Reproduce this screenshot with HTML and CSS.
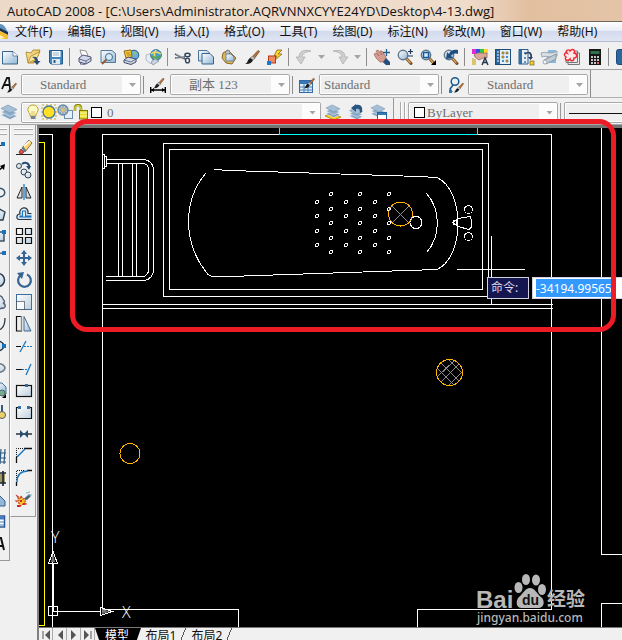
FILE: index.html
```html
<!DOCTYPE html>
<html lang="zh-CN">
<head>
<meta charset="utf-8">
<title>AutoCAD 2008</title>
<link rel="stylesheet" href="styles.css">
</head>
<body>
<svg class="defs" aria-hidden="true">
  <defs>
    <linearGradient id="ice" x1="0" y1="0" x2="1" y2="1"><stop offset="0" stop-color="#ffffff"/><stop offset="1" stop-color="#8fb6d6"/></linearGradient>
    <linearGradient id="pale" x1="0" y1="0" x2="1" y2="1"><stop offset="0" stop-color="#ffffff"/><stop offset="1" stop-color="#bccfe0"/></linearGradient>
    <linearGradient id="gold" x1="0" y1="0" x2="1" y2="1"><stop offset="0" stop-color="#fff3b0"/><stop offset="1" stop-color="#d09a28"/></linearGradient>
    <symbol id="brush" viewBox="0 0 16 16"><path d="M8 8L14 1.5L15.500 2.500L10 10Z" fill="#b9743c" stroke="#6d4222" stroke-width=".7"/><path d="M6 9L8.500 7L11 9.500L9 11Z" fill="#bcc3c9" stroke="#555" stroke-width=".5"/><path d="M1 15C4 14 3 11 6 9L9 11C8 14 5 15.500 1 15Z" fill="#1c1c1c"/></symbol>
    <symbol id="layers" viewBox="0 0 16 16"><path d="M0 11L7 8L16 12L9 15.500Z" fill="#7e9fbd" stroke="#e8f0f7" stroke-width=".6"/><path d="M0 8L7 5L16 9L9 12.500Z" fill="#8eacc7" stroke="#eef5fa" stroke-width=".6"/><path d="M0 4.500L7 1L16 5.500L9 9Z" fill="#a5bfd6" stroke="#6f8da9" stroke-width=".6"/></symbol>
    <symbol id="lens" viewBox="0 0 16 16"><path d="M9 9L14 14.500" stroke="#7a4d24" stroke-width="3" stroke-linecap="round"/><path d="M9.500 9.500L13.500 14" stroke="#d8a35a" stroke-width="1.400"/><circle cx="6" cy="6" r="4.700" fill="url(#ice)" stroke="#65788a" stroke-width="1.400"/></symbol>
  </defs>
</svg>
<div class="app">
  <header class="titlebar"><h1>AutoCAD 2008 - [C:\Users\Administrator.AQRVNNXCYYE24YD\Desktop\4-13.dwg]</h1></header>
  <nav class="menubar">
    <svg class="menu-logo" viewBox="0 0 8 16"><path d="M0 0C4 0 6 4 8 9L0 5Z" fill="#5f93bd"/><path d="M0 4L8 8V11L0 7Z" fill="#1b3350"/><path d="M0 7L8 11V15H0Z" fill="#f5bd2e"/><path d="M0 11L5 14L0 15Z" fill="#fff3c0"/></svg>
    <button>文件(F)</button><button>编辑(E)</button><button>视图(V)</button><button>插入(I)</button><button>格式(O)</button><button>工具(T)</button><button>绘图(D)</button><button>标注(N)</button><button>修改(M)</button><button>窗口(W)</button><button>帮助(H)</button>
  </nav>

  <div class="toolbar standard">
    <button class="tool" aria-label="新建"><svg viewBox="0 0 16 16"><path d="M.5 2.500H11L15.500 7V15H.5Z" fill="url(#ice)" stroke="#3c6488"/><path d="M11 2.500V7H15.500" fill="#fff" stroke="#3c6488" stroke-width=".7"/></svg></button>
    <button class="tool" aria-label="打开"><svg viewBox="0 0 16 16"><path d="M1 3L6 4L8 1L15 1L13 7L9 14H3Z" fill="url(#gold)" stroke="#a87a20" stroke-width=".8"/><path d="M3 14L6 7L15 3L11 10Z" fill="#f9e79a" stroke="#b08528" stroke-width=".7"/><path d="M7 8C11 7 13 9 13 12H15.500L12 16L8.500 12H10.500C10.500 10 9 9 7 8Z" fill="#254d76"/></svg></button>
    <button class="tool" aria-label="保存"><svg viewBox="0 0 16 16"><path d="M1.500 1.500H14.500V15H3L1.500 13.500Z" fill="#4586bd" stroke="#24598c"/><rect x="4" y="2" width="8.500" height="6" fill="#f7fbff"/><path d="M5 4H11M5 6H11" stroke="#9cb0c1"/><rect x="4" y="10" width="8" height="5" fill="#dce8f2"/><rect x="5.500" y="11" width="2" height="3" fill="#2c5c8d"/></svg></button>
    <span class="sep"></span>
    <button class="tool" aria-label="打印"><svg viewBox="0 0 16 16"><path d="M3 1L9 2L11 7L5 8Z" fill="#fff" stroke="#777" stroke-width=".8"/><path d="M2 9L6 6L14 8V12L9 15L2 13Z" fill="#d3d8ea" stroke="#4f5673" stroke-width="1"/><path d="M2 10L9 12L14 9M9 12V15M5 13L3 15L8 15.500" stroke="#4f5673" fill="none" stroke-width=".8"/></svg></button>
    <button class="tool" aria-label="打印预览"><svg viewBox="0 0 16 16"><path d="M1 1.500H12L15.500 4.500V13.500H1Z" fill="url(#ice)" stroke="#55799a"/><path d="M7 10L2 15" stroke="#9a5b2c" stroke-width="2"/><circle cx="9" cy="8" r="3.500" fill="#d8eaf7" stroke="#456b8d"/></svg></button>
    <button class="tool" aria-label="发布"><svg viewBox="0 0 16 16"><circle cx="11" cy="6" r="4.800" fill="#65aee0" stroke="#2c5a87"/><path d="M10 2L14 4L12 7Z" fill="#8fc46c"/><path d="M1 2L8 1L9 8L3 9Z" fill="#f8cf35" stroke="#8f6b12"/><path d="M3 4H7M4 6H8" stroke="#a87a18"/><path d="M1 11L5 8L13 10V13L8 15.500L1 13.500Z" fill="#cfd6e4" stroke="#3f4e69"/><path d="M1 11L8 13L13 10" fill="none" stroke="#3f4e69" stroke-width=".7"/></svg></button>
    <button class="tool" aria-label="三维 DWF"><svg viewBox="0 0 16 16"><path d="M0 6L7 4V12L5 15L0 11Z" fill="#e8edf4" stroke="#a4adbb" stroke-width=".8"/><circle cx="10" cy="6" r="5.400" fill="#4b9fd0" stroke="#275b86" stroke-width=".8"/><path d="M5 5C8 2 12 3 15 5M10 1C8 4 8 8 10 11" fill="none" stroke="#f4de68" stroke-width="1.500"/><path d="M5 7C8 9 12 9 15 7" fill="none" stroke="#4fa759" stroke-width="2"/><path d="M9 10L13 12L7 16L5 13Z" fill="#cdd6e4" stroke="#7d8795" stroke-width=".7"/></svg></button>
    <span class="sep"></span>
    <button class="tool" aria-label="剪切"><svg viewBox="0 0 16 16"><path d="M0 5L10 10M0 9L10 8" stroke="#4a5661" stroke-width="1.600"/><path d="M1 5L9 9M1 9H6" stroke="#e5ebf0" stroke-width=".6"/><ellipse cx="12.500" cy="6" rx="2.600" ry="1.700" fill="none" stroke="#30435c" stroke-width="1.400"/><ellipse cx="12.500" cy="11.500" rx="2" ry="2.400" fill="none" stroke="#30435c" stroke-width="1.400"/></svg></button>
    <button class="tool" aria-label="复制"><svg viewBox="0 0 16 16"><path d="M.5 1.500H9L11.500 4V12H.5Z" fill="url(#ice)" stroke="#4d7497"/><path d="M4 4.500H12L15.500 8V15H4Z" fill="url(#ice)" stroke="#3c6488"/></svg></button>
    <button class="tool" aria-label="粘贴"><svg viewBox="0 0 16 16"><path d="M2 4L7 1L15 9L11 15L5 14L1 9Z" fill="#dcb65c" stroke="#8c682b"/><path d="M4 3L8 1L9 4L6 6Z" fill="#c2c9ce" stroke="#6b737b" stroke-width=".7"/><path d="M5 5H10L13 8V12H5Z" fill="url(#ice)" stroke="#5c7690" stroke-width=".8"/></svg></button>
    <button class="tool" aria-label="特性匹配"><svg viewBox="0 0 16 16"><use href="#brush"/></svg></button>
    <button class="tool" aria-label="块编辑器"><svg viewBox="0 0 16 16"><path d="M10 1L7 7H10L7 12L15 5H11L15 1Z" fill="#ffd62e" stroke="#8a6713" stroke-width=".8"/><rect x="1.500" y="7" width="7" height="7" fill="#f18a5e" stroke="#b33a20"/><rect x="0" y="12" width="4" height="4" fill="#1c78d0"/></svg></button>
    <span class="sep"></span>
    <button class="tool" aria-label="放弃"><svg viewBox="0 0 16 16"><path d="M15 2C7 0 3 3 3 8H0L5 15L9 8H6C6 5 9 3 15 2Z" fill="#cfcfcf" stroke="#aaa" stroke-width=".7"/></svg></button>
    <button class="tool drop" aria-label="放弃列表"></button>
    <button class="tool" aria-label="重做"><svg viewBox="0 0 16 16"><path d="M1 2C9 0 13 3 13 8H16L11 15L7 8H10C10 5 7 3 1 2Z" fill="#cfcfcf" stroke="#aaa" stroke-width=".7"/></svg></button>
    <button class="tool drop" aria-label="重做列表"></button>
    <span class="sep"></span>
    <button class="tool" aria-label="实时平移"><svg viewBox="0 0 16 16"><path d="M0 5L2 4L5 7L2 2L4 1L8 6L6 2L8 2L12 8V10L16 14L13 16L9 13H6L2 9Z" fill="#d49c91" stroke="#a0675d" stroke-width=".7"/><path d="M9 13L12 9L16 13V16H12Z" fill="#274f7c"/><path d="M12.500 0V7M9 3.500H16" stroke="#27608e" stroke-width="1.300"/></svg></button>
    <button class="tool" aria-label="实时缩放"><svg viewBox="0 0 16 16"><use href="#lens"/><path d="M11 2.500H16M13.500 0V5M11 7H16" stroke="#18395a" stroke-width="1.200"/></svg></button>
    <button class="tool" aria-label="窗口缩放"><svg viewBox="0 0 16 16"><use href="#lens"/><rect x="3.500" y="3.500" width="5" height="5" fill="#d9edfa" stroke="#175a9c" stroke-width="1.500"/><path d="M16 11V16H11Z" fill="#000"/></svg></button>
    <button class="tool" aria-label="缩放上一个"><svg viewBox="0 0 16 16"><use href="#lens"/><path d="M15 1C10 0 7 2 6 5L4 3L3 10L10 9L8 7C9 5 11 4 15 5Z" fill="#1f4f80"/></svg></button>
    <span class="sep"></span>
    <button class="tool" aria-label="特性"><svg viewBox="0 0 16 16"><rect width="4" height="5" fill="#e32bd3"/><rect x="4" width="4" height="5" fill="#3949e8"/><rect x="8" width="4" height="5" fill="#22c94b"/><rect x="12" width="4" height="5" fill="#ffd528"/><path d="M2 6C6 2 11 5 15 4V9L11 9L7 11L3 8Z" fill="#daa697" stroke="#94675b" stroke-width=".8"/><path d="M1 9V16M3 10V16" stroke="#d6b641" stroke-width="1.500"/><path d="M10 16L13 9L16 16M11 13.500H15" stroke="#233448" fill="none" stroke-width="1.400"/></svg></button>
    <button class="tool" aria-label="设计中心"><svg viewBox="0 0 16 16"><rect x=".5" y=".5" width="15" height="15" fill="#e6f0f8" stroke="#1f4c77"/><rect x="1" y="1" width="4" height="14" fill="#2c659c"/><path d="M2 3H4M2 6H4M2 9H4M2 12H4" stroke="#fff"/><path d="M7 3H9V5H7ZM11 3H13V5H11ZM7 7H9V9H7ZM11 11H13V13H11Z" fill="#e0bb28" stroke="#6b6340" stroke-width=".6"/><path d="M11 7H13V9H11ZM7 11H9V13H7Z" fill="#418dce"/></svg></button>
    <button class="tool" aria-label="工具选项板"><svg viewBox="0 0 16 16"><path d="M1 .5H10V15H1Z" fill="#e6f0f8" stroke="#2b5d8d"/><rect x="1" y="1" width="3" height="14" fill="#346da2"/><path d="M6 3H8V5H6ZM6 8H8V10H6ZM6 12H8V14H6Z" fill="#668fb4"/><path d="M7 5C11 2 14 4 13 9" fill="none" stroke="#273e58" stroke-width="1.600"/><path d="M10 8H15L12.500 11Z" fill="#273e58"/><rect x="12" y="12" width="4" height="4" fill="#f5cb2e" stroke="#796422" stroke-width=".7"/></svg></button>
    <button class="tool" aria-label="图纸集管理器"><svg viewBox="0 0 16 16"><path d="M7 1H15V14H5Z" fill="#87b8de"/><path d="M0 4C4 2 10 6 16 2V7C11 10 5 6 1 8Z" fill="#d7dfe5" stroke="#8898a4" stroke-width=".8"/><path d="M3 11L15 5V10L5 15Z" fill="#c1cbd2" stroke="#7c8b96" stroke-width=".8"/><ellipse cx="4" cy="13" rx="2" ry="2" fill="#f5f7f8" stroke="#7c8b96" stroke-width=".7"/></svg></button>
    <button class="tool" aria-label="标记集管理器"><svg viewBox="0 0 16 16"><path d="M4 4H15.500V15.500H4ZM2 2H13.500V13.500H2Z" fill="#e9e9e9" stroke="#777"/><path d="M3 4C1 1 5 0 6 2C8-1 12 1 10 4C14 5 13 9 10 9C10 13 6 12 6 10C3 13 0 10 2 8C-1 6 1 3 3 4Z" fill="#ffe8e8" stroke="#ef2936" stroke-width="1.400"/></svg></button>
    <button class="tool" aria-label="快速计算器"><svg viewBox="0 0 16 16"><rect x="2" width="12" height="16" fill="#171717"/><rect x="3.500" y="2" width="9" height="3" fill="#2d704b"/><path d="M4 8H12M4 11H12M4 14H12" stroke="#fff" stroke-width="1.700" stroke-dasharray="2 1"/><path d="M10 14H12" stroke="#e43b2e" stroke-width="1.700"/></svg></button>
    <span class="sep"></span>
    <button class="tool" aria-label="帮助"><svg viewBox="0 0 16 16"><rect x=".5" y=".5" width="15" height="15" rx="2" fill="#2d669d" stroke="#1c4a78"/></svg></button>
  </div>

  <div class="toolbar styles">
    <div class="group"><span class="icon"><svg viewBox="0 0 16 16"><path d="M1 12L6 1H8L9 12M3 8H9" fill="none" stroke="#151515" stroke-width="1.800"/><use href="#brush" x="5" y="5" width="11" height="11"/></svg></span><span class="combo"><select class="indent" aria-label="文字样式"><option>Standard</option></select></span></div>
    <div class="group"><span class="icon"><svg viewBox="0 0 16 16"><path d="M.7 10V16M15.300 10V16M1 13H15" stroke="#000" stroke-width="1.400"/><path d="M1 13L4 11V15ZM15 13L12 11V15Z"/><use href="#brush" x="2" y="0" width="13" height="12"/></svg></span><span class="combo"><select class="indent" aria-label="标注样式"><option>副本 123</option></select></span></div>
    <div class="group"><span class="icon"><svg viewBox="0 0 16 16"><rect x=".5" y="3.500" width="13" height="12" fill="#dceaf7" stroke="#336ba8"/><rect x="1" y="4" width="12" height="3" fill="#3577bb"/><path d="M1 10H13M1 13H13M5 7V15M9 7V15" stroke="#4b80b5"/><use href="#brush" x="4" y="0" width="12" height="12"/></svg></span><span class="combo"><select aria-label="表格样式"><option>Standard</option></select></span></div>
    <div class="group last"><span class="icon"><svg viewBox="0 0 16 16"><circle cx="7" cy="4.500" r="3.800" fill="#e5f1fa" stroke="#1f5689" stroke-width="1.500"/><path d="M5 8L2 12L4 15" fill="none" stroke="#1f5689" stroke-width="1.500"/><rect x="1" y="13" width="3" height="3" fill="#2179bd"/><use href="#brush" x="5" y="5" width="11" height="11"/></svg></span><span class="combo"><select class="indent" aria-label="多重引线样式"><option>Standard</option></select></span></div>
  </div>

  <div class="toolbar properties">
    <div class="group layers">
      <span class="icon"><svg viewBox="0 0 16 16"><use href="#layers"/></svg></span>
      <span class="combo wide"><select aria-label="图层"><option>0</option></select>
        <span class="states">
          <svg viewBox="0 0 16 16"><path d="M5 10C1 6 3 1 8 1S15 6 11 10V12H5Z" fill="#fffbc7" stroke="#bda228"/><path d="M5.500 12H10.500V15H6Z" fill="#78828d"/><path d="M7 11V7M9 11V7" stroke="#c6aa30" stroke-width=".7"/></svg>
          <svg viewBox="0 0 16 16"><path d="M1 1H15V15H1Z" fill="none" stroke="#c9a92c" stroke-dasharray="2 2"/><circle cx="8" cy="8" r="6" fill="#ffdf25" stroke="#477796" stroke-width="1.300"/></svg>
          <svg viewBox="0 0 16 16"><rect x="7.500" y="6.500" width="8" height="8" fill="#e7eef5" stroke="#6b8eaf"/><circle cx="6" cy="6" r="5" fill="#b7c7cc" stroke="#6687a2" stroke-width="1.300"/><path d="M6 1V11M1 6H11M2.500 2.500L9.500 9.500M9.500 2.500L2.500 9.500" stroke="#7693a9" stroke-width=".7"/><circle cx="6" cy="6" r="2" fill="#d9c36f"/></svg>
          <svg viewBox="0 0 16 16"><path d="M2 7V4C2 0 8 0 8 4V9" fill="none" stroke="#8c8b19" stroke-width="2.600"/><path d="M2 7V4C2 1 8 1 8 4V9" fill="none" stroke="#f5ed48"/><rect x="6.500" y="6.500" width="8" height="8.500" fill="#e5dc2e" stroke="#77760c"/><path d="M7 9H14M7 12H14" stroke="#fffba0"/></svg>
          <span class="swatch"></span>
        </span>
      </span>
      <button class="tool" aria-label="置为当前图层"><svg viewBox="0 0 16 16"><path d="M0 12L7 9L16 13L9 16Z" fill="#f5ce28" stroke="#9c7b11" stroke-width=".7"/><use href="#layers" y="0" height="14"/></svg></button>
      <button class="tool" aria-label="上一个图层"><svg viewBox="0 0 16 16"><use href="#layers" y="3" height="13"/><path d="M14 8C15 3 13 0 8 1L8 0L3 4L8 8V5C11 4 12 5 12 9Z" fill="#285581"/></svg></button>
      <button class="tool" aria-label="图层状态"><svg viewBox="0 0 16 16"><use href="#layers" x="-1" y="0" height="14"/><rect x="6.500" y="8.500" width="9" height="7" fill="#fff" stroke="#27659c"/><path d="M7 10H15" stroke="#347bb8" stroke-width="2"/></svg></button>
    </div>
    <div class="group object">
      <span class="grip"></span>
      <span class="combo color"><select aria-label="颜色"><option>ByLayer</option></select><span class="states"><span class="swatch"></span></span></span>
      <span class="rule"></span>
      <span class="combo linetype"><select aria-label="线型"><option></option></select></span>
    </div>
  </div>

  <main class="workspace">
    <div class="dock draw">
      <button class="tool" aria-label="直线"><svg viewBox="0 0 16 16"><path d="M1 15L12 4" stroke="#222"/><rect x="11" y="2" width="4" height="4" fill="#1873be"/></svg></button>
      <button class="tool" aria-label="构造线"><svg viewBox="0 0 16 16"><path d="M1 14L13 5" stroke="#111" stroke-width="1.500"/><path d="M15 2L14 8L10 4Z"/></svg></button>
      <button class="tool" aria-label="多段线"><svg viewBox="0 0 16 16"><path d="M8 4C17 4 17 13 8 13" fill="none" stroke="#35536f" stroke-width="1.500"/></svg></button>
      <button class="tool" aria-label="正多边形"><svg viewBox="0 0 16 16"><path d="M8 2L15 6L13 14H4L1 6Z" fill="url(#pale)" stroke="#273b4e" stroke-width="1.300"/></svg></button>
      <button class="tool" aria-label="矩形"><svg viewBox="0 0 16 16"><rect x="1" y="4" width="13" height="9" fill="url(#pale)" stroke="#273b4e" stroke-width="1.300"/><rect x="12" y="2" width="4" height="4" fill="#1873be"/></svg></button>
      <button class="tool" aria-label="圆弧"><svg viewBox="0 0 16 16"><path d="M1 13C2 6 7 3 13 3" stroke="#222" fill="none"/><rect x="12" y="1" width="4" height="4" fill="#1873be"/></svg></button>
      <button class="tool" aria-label="圆"><svg viewBox="0 0 16 16"><circle cx="8" cy="8" r="6.500" fill="url(#pale)" stroke="#273b4e" stroke-width="1.500"/></svg></button>
      <button class="tool" aria-label="修订云线"><svg viewBox="0 0 16 16"><path d="M3 4C7 0 12 1 13 5C15 7 15 9 13 9C17 11 15 15 12 14C8 16 3 15 2 12Z" fill="url(#pale)" stroke="#526273" stroke-width="1.400"/></svg></button>
      <button class="tool" aria-label="样条曲线"><svg viewBox="0 0 16 16"><path d="M1 8C4 1 8 18 12 12C14 10 15 6 15 2" fill="none" stroke="#2f3a44" stroke-width="1.300"/></svg></button>
      <button class="tool" aria-label="椭圆"><svg viewBox="0 0 16 16"><ellipse cx="7" cy="8" rx="7" ry="5" fill="url(#pale)" stroke="#203242" stroke-width="1.300"/><rect x="12" y="6" width="4" height="4" fill="#1873be"/></svg></button>
      <button class="tool" aria-label="椭圆弧"><svg viewBox="0 0 16 16"><ellipse cx="8" cy="8" rx="7" ry="4.500" fill="url(#pale)" stroke="#6a7580" stroke-width="1.500"/></svg></button>
      <button class="tool" aria-label="插入块"><svg viewBox="0 0 16 16"><path d="M5 1H12L16 5V12H5Z" fill="url(#ice)" stroke="#477499"/><circle cx="12" cy="11" r="3" fill="#7bac8a" stroke="#4b6a79"/><path d="M16 12V16H12Z"/></svg></button>
      <button class="tool" aria-label="创建块"><svg viewBox="0 0 16 16"><path d="M12 1V9" stroke="#315a80" stroke-width="2"/><circle cx="12" cy="11" r="3.500" fill="#ead06a" stroke="#555c56"/></svg></button>
      <button class="tool" aria-label="点"><svg viewBox="0 0 16 16"><circle cx="8" cy="8" r="1.500"/></svg></button>
      <button class="tool" aria-label="图案填充"><svg viewBox="0 0 16 16"><path d="M8 5H16M8 10H16M8 14H16M11 1L10 16M15 1L14 16" stroke="#2d5980" stroke-width="1.200"/></svg></button>
      <button class="tool" aria-label="渐变色"><svg viewBox="0 0 16 16"><rect x="5" y="4" width="10" height="9" fill="#9e9760"/><path d="M8 3H16M8 13H16M13 1V16" stroke="#1e2935" stroke-width="1.700"/></svg></button>
      <button class="tool" aria-label="面域"><svg viewBox="0 0 16 16"><path d="M1 4H10L15 9V14H1Z" fill="#91b6d9" stroke="#355f87"/></svg></button>
      <button class="tool" aria-label="表格"><svg viewBox="0 0 16 16"><rect x="1" y="2" width="13.500" height="11" fill="#fff" stroke="#2c5a92" stroke-width="1.500"/><path d="M1 4H14" stroke="#427cc1" stroke-width="3"/><path d="M1 8H14M1 11H14M8 3V13" stroke="#427cc1"/></svg></button>
      <button class="tool" aria-label="多行文字"><svg viewBox="0 0 16 16"><path d="M3 14L9 2H11L14 14M6 10H13" fill="none" stroke="#111" stroke-width="2"/></svg></button>
    </div>
    <div class="dock modify">
      <button class="tool" aria-label="删除"><svg viewBox="0 0 16 16"><path d="M0 14.500H16" stroke="#222"/><path d="M6 8L13 0L16 3L9 12Z" fill="#ffd56b" stroke="#665634" stroke-width=".8"/><path d="M8 6L14 1" stroke="#fff" stroke-width="1.500"/><path d="M5 9L8 12L6 14H4L3 12Z" fill="#dc4e48" stroke="#753532" stroke-width=".8"/><path d="M6.500 7.500L9.500 11" stroke="#527a9e" stroke-width="2"/></svg></button>
      <button class="tool" aria-label="复制对象"><svg viewBox="0 0 16 16"><circle cx="3" cy="4" r="2.500" fill="url(#pale)" stroke="#34414e"/><path d="M6 2C10-1 14 2 13 6" fill="none" stroke="#254e76" stroke-width="2"/><path d="M10 4H15L13 8Z" fill="#254e76"/><circle cx="8" cy="10" r="3" fill="url(#pale)" stroke="#34414e"/><circle cx="12" cy="13" r="3" fill="url(#pale)" stroke="#34414e"/></svg></button>
      <button class="tool" aria-label="镜像"><svg viewBox="0 0 16 16"><path d="M6 3V14H1ZM10 3L15 14H10Z" fill="url(#pale)" stroke="#222"/><path d="M8 0V16" stroke="#187dcc" stroke-width="1.300"/></svg></button>
      <button class="tool" aria-label="偏移"><svg viewBox="0 0 16 16"><path d="M15.500 13.500H3C0 13.500 0 8 4 8C2 1 13-1 12 7.500H15.500" fill="url(#pale)" stroke="#243849" stroke-width="1.200"/><path d="M15.500 11H4V10H6.500V5H9.500V10H15.500" fill="#f4f9fc" stroke="#1977c2" stroke-width="1.200"/></svg></button>
      <button class="tool" aria-label="阵列"><svg viewBox="0 0 16 16"><path d="M.5.5H6.500V6.500H.5ZM9.500.5H15.500V6.500H9.500ZM.5 9.500H6.500V15.500H.5ZM9.500 9.500H15.500V15.500H9.500Z" fill="url(#pale)" stroke="#111" stroke-width="1.200"/></svg></button>
      <button class="tool" aria-label="移动"><svg viewBox="0 0 16 16"><path d="M8 0L11 4H9V7H12V5L16 8L12 11V9H9V12H11L8 16L5 12H7V9H4V11L0 8L4 5V7H7V4H5Z" fill="#356596"/></svg></button>
      <button class="tool" aria-label="旋转"><svg viewBox="0 0 16 16"><path d="M5 3A6.400 6.400 0 1 0 11 2.500" fill="none" stroke="#356596" stroke-width="2.200"/><path d="M1 1L8 0L6 7Z" fill="#356596"/></svg></button>
      <button class="tool" aria-label="缩放"><svg viewBox="0 0 16 16"><rect x=".5" y=".5" width="15" height="15" fill="url(#pale)" stroke="#3f6d99"/><path d="M.5 7.500H8.500V15.500H.5Z" fill="#f7fbff" stroke="#111" stroke-dasharray="1 1"/></svg></button>
      <button class="tool" aria-label="拉伸"><svg viewBox="0 0 16 16"><path d="M.5.500H5.500V15H.5Z" fill="none" stroke="#111" stroke-width="1.200"/><path d="M5.500.500V15" stroke="#fff" stroke-dasharray="1 1" stroke-width="1.500"/><path d="M8 .5L15 15H8Z" fill="url(#ice)" stroke="#476b8c"/></svg></button>
      <button class="tool" aria-label="修剪"><svg viewBox="0 0 16 16"><path d="M0 8.500H5" stroke="#111"/><path d="M4 14L10 3" stroke="#1976bf" stroke-width="1.300"/><path d="M8 8.500H16" stroke="#1976bf" stroke-dasharray="2 1"/></svg></button>
      <button class="tool" aria-label="延伸"><svg viewBox="0 0 16 16"><path d="M0 9.500H6" stroke="#111"/><path d="M6 9.500H12" stroke="#1976bf" stroke-dasharray="2 1"/><path d="M10 15L15 4" stroke="#1976bf" stroke-width="1.300"/></svg></button>
      <button class="tool" aria-label="打断于点"><svg viewBox="0 0 16 16"><rect x=".5" y="3.500" width="15" height="11" fill="url(#pale)" stroke="#111" stroke-width="1.200"/><rect x="9" y="2" width="3" height="3" fill="#386b9e"/></svg></button>
      <button class="tool" aria-label="打断"><svg viewBox="0 0 16 16"><rect x=".5" y="3.500" width="15" height="11" fill="url(#pale)"/><path d="M3 3.500H.5V14.500H15.500V3.500H13" fill="none" stroke="#111" stroke-width="1.200"/><path d="M2 2H5V5H2ZM11 2H14V5H11Z" fill="#386b9e"/></svg></button>
      <button class="tool" aria-label="合并"><svg viewBox="0 0 16 16"><path d="M0 8H16" stroke="#111" stroke-width="1.300"/><path d="M4 4L8 8L4 12ZM12 4L8 8L12 12Z" fill="#254c72"/></svg></button>
      <button class="tool" aria-label="倒角"><svg viewBox="0 0 16 16"><path d="M.5 15V9M8 .500H16" stroke="#111" stroke-width="1.300"/><path d="M.5 9V.5H8" fill="none" stroke="#111" stroke-dasharray="1 1"/><path d="M1 9L9 1" stroke="#1976bf" stroke-width="1.400"/></svg></button>
      <button class="tool" aria-label="圆角"><svg viewBox="0 0 16 16"><path d="M.5 16V12M11 .500H16" stroke="#111" stroke-width="1.300"/><path d="M.5 10V.5H8" fill="none" stroke="#111" stroke-dasharray="1 1"/><path d="M1 12C1 5 5 1 12 1" fill="none" stroke="#1976bf" stroke-width="1.500"/></svg></button>
      <button class="tool" aria-label="分解"><svg viewBox="0 0 16 16"><path d="M1 4L4 6L5 4L7 7L10 6L9 10L10 12L7 12L3 15L3 11L0 9L3 8Z" fill="#f4c629" stroke="#c83425" stroke-width="1.200" stroke-dasharray="2 1"/><path d="M4 8H6V10H4ZM7 11H9V13H7ZM1 13H4V15H1Z" fill="#ce282b"/><path d="M8 7L13 2L15 4L11 8Z" fill="#46647c"/><path d="M10 1L14 0M12 3L16 3" stroke="#8ab2cd"/></svg></button>
    </div>

    <section class="view">
      <div class="canvas">
        <svg class="drawing" viewBox="39 128 583 499" preserveAspectRatio="xMinYMin slice" role="img" aria-label="图形">
          <g class="ink">
            <path d="M39 134.500H52.500V627M102.500 609V134.500H279M477 134.500H551.500V609.500H417.500V627M102 609.500H238.500V627M103 304.500H553M103 308.500H553M601.500 128V554.500H622M622 603.500H601.500V627"/>
            <path d="M163.500 143.500H488.500V296.500H163.500ZM169.500 149.500H482.500V289.500H169.500Z"/>
            <path d="M106 159.500H143C149 159.500 153.500 164 153.500 170V269C153.500 276 149 280.500 143 280.500H106M106 163.500H143C146 163.500 148.500 166 148.500 169V270C148.500 273 146 276.500 143 276.500H106M118.500 163V276M122.500 163V276M132.500 163V276M136.500 163V276M103 154.500H104.500V168.500H103M104.500 156.500H106.500V166.500H104.500"/>
            <path d="M205.500 173.500C183 201 182 243 208 274.500L212 276.500H229L437 269.500M214 169.500L230 170.500L419 176.500L437 177.500C465 190 465 257 437 269.500"/>
            <path d="M426.500 193.500C441 210 441 236 426.500 252.500"/>
            <circle cx="416" cy="222.500" r="6"/><circle cx="468.500" cy="209.500" r="4"/><circle cx="468.500" cy="236.500" r="4"/>
            <circle cx="455" cy="222.500" r="2"/><path d="M453 222.500L458 218.500L470 216.500L471.500 220V227L469 229.500L458 226.500Z"/>
            <path d="M457 269.500H525M491.500 236V304"/>
          </g>
          <g class="ink holes">
            <circle cx="317" cy="202" r="1.500"/><circle cx="317" cy="216" r="1.500"/><circle cx="317" cy="231" r="1.500"/><circle cx="317" cy="245" r="1.500"/>
            <circle cx="346" cy="202" r="1.500"/><circle cx="346" cy="216" r="1.500"/><circle cx="346" cy="231" r="1.500"/><circle cx="346" cy="245" r="1.500"/>
            <circle cx="375" cy="202" r="1.500"/><circle cx="375" cy="216" r="1.500"/><circle cx="375" cy="231" r="1.500"/><circle cx="375" cy="245" r="1.500"/>
            <circle cx="331" cy="194" r="1.500"/><circle cx="331" cy="209" r="1.500"/><circle cx="331" cy="223" r="1.500"/><circle cx="331" cy="238" r="1.500"/><circle cx="331" cy="252" r="1.500"/>
            <circle cx="360" cy="194" r="1.500"/><circle cx="360" cy="209" r="1.500"/><circle cx="360" cy="223" r="1.500"/><circle cx="360" cy="238" r="1.500"/><circle cx="360" cy="252" r="1.500"/>
            <circle cx="389" cy="194" r="1.500"/><circle cx="389" cy="209" r="1.500"/><circle cx="389" cy="223" r="1.500"/><circle cx="389" cy="238" r="1.500"/><circle cx="389" cy="252" r="1.500"/>
          </g>
          <path class="hatch" d="M392 206L409 223M409 206L392 223M437 368L453 384M441 363L459 381M449 360L462 373M437 377L454 361M441 382L459 364M449 385L462 372"/>
          <g class="lamp"><circle cx="400.500" cy="214" r="12"/><circle cx="449.500" cy="372.500" r="13"/><circle cx="130" cy="453.500" r="10"/></g>
          <path class="window" d="M279.500 128V134.500H477.500V128"/>
          <path class="limits" d="M39 142.500H44.500V625.500H39"/>
          <g class="ink">
            <path d="M48.500 606.500H57.500V615.500H48.500ZM53 551.500L48.500 563.500H57.500ZM100.500 607.500V615.500L112 611.500ZM52 611.500H100"/>
            <path d="M53 563V611" stroke-width="2"/>
          </g>
          <path class="shade" d="M53 554L51 562H55ZM102 609L110 611.500L102 614Z"/>
          <text class="axis" x="51" y="543">Y</text><text class="axis" x="122" y="618">X</text>
          <g class="mark">
            <text class="brand" x="476" y="608">Bai</text>
            <ellipse cx="518.500" cy="587.500" rx="4" ry="5.500"/><ellipse cx="526" cy="579.500" rx="4" ry="5.500"/><ellipse cx="536" cy="580" rx="4" ry="5.500"/><ellipse cx="542" cy="589.500" rx="4" ry="5.500"/>
            <path d="M530 588C535 588 537 594 541 597C545 600 545 608 538 608H522C515 608 516 600 519 597C523 594 525 588 530 588Z"/>
            <text class="du" x="522" y="605">du</text>
            <text class="jy" x="547" y="606">经验</text>
            <text class="site" x="477" y="622">jingyan.baidu.com</text>
          </g>
        </svg>
        <form class="prompt"><label for="cmd">命令:</label><input id="cmd" type="text" value="-34194.99565"></form>
      </div>
      <div class="tabs">
        <button class="step" aria-label="第一个"><svg viewBox="0 0 10 10"><path d="M2 1V9" stroke="#555"/><path d="M9 0V10L4 5Z"/></svg></button>
        <button class="step" aria-label="上一个"><svg viewBox="0 0 10 10"><path d="M8 0V10L3 5Z"/></svg></button>
        <button class="step" aria-label="下一个"><svg viewBox="0 0 10 10"><path d="M2 0V10L7 5Z"/></svg></button>
        <button class="step" aria-label="最后一个"><svg viewBox="0 0 10 10"><path d="M8 1V9" stroke="#555"/><path d="M1 0V10L6 5Z"/></svg></button>
        <button class="tab active">模型</button><button class="tab">布局1</button><button class="tab">布局2</button>
      </div>
    </section>
  </main>
  <div class="highlight"></div>
</div>
</body>
</html>
```
FILE: styles.css
```css
* { box-sizing: border-box; }
body {
  margin: 0;
  background: #f0f0f0;
  font: 12px/16px "Noto Sans", "Noto Sans CJK SC", sans-serif;
  color: #111;
}
button { margin: 0; padding: 0; border: 0; background: none; font: inherit; color: inherit; }
.defs { position: absolute; width: 0; height: 0; }
.app { position: relative; display: flex; flex-direction: column; height: 100vh; overflow: hidden; }

.titlebar {
  flex: none;
  height: 22px;
  padding: 3px 7px;
  overflow: hidden;
  background: linear-gradient(90deg, #ecd9c7, #efdccb 75%, #e2bf9f 85%, #e4c4a7);
  border-bottom: 1px solid #6c6660;
  white-space: nowrap;
}
.titlebar h1 { margin: 0; font: 400 13px/16px "Open Sans", sans-serif; }

.menubar {
  flex: none;
  display: flex;
  align-items: center;
  gap: 15px;
  height: 20px;
  overflow: hidden;
  background: linear-gradient(#fff, #e9edf6 45%, #d3dbed 50%, #dfe5f3);
  border-bottom: 1px solid #b5bad0;
  white-space: nowrap;
}
.menubar button { flex: none; }
.menu-logo { flex: none; width: 8px; height: 16px; margin-right: -8px; }

.toolbar { flex: none; display: flex; overflow: hidden; }
.standard { height: 28px; padding-top: 2px; margin-left: -2px; border-bottom: 1px solid #a2a2a2; }
.tool { flex: none; display: grid; place-items: center; width: 23px; height: 22px; }
.standard .tool { height: 26px; }
.tool svg, .icon svg { display: block; width: 16px; height: 16px; overflow: visible; }
.sep { flex: none; width: 6px; height: 18px; margin-top: 4px; background: linear-gradient(#8c8c8c, #8c8c8c) 2px 0 / 1px 100% no-repeat; }
.tool.drop { width: 13px; }
.drop::before, .combo::after {
  content: "";
  width: 7px;
  height: 4px;
  background: #a5a5a5;
  clip-path: polygon(0 0, 100% 0, 50% 100%);
}

.group { flex: none; display: flex; align-items: center; padding: 2px 0 0 2px; }
.styles { height: 28px; margin-left: -5px; border-bottom: 1px solid #b0b0b0; }
.styles .group { width: 149px; background: linear-gradient(#8c8c8c, #8c8c8c) 148px 6px / 1px 18px no-repeat; }
.styles .last { background: none; border-right: 1px solid #8c8c8c; }
.icon { flex: none; display: grid; place-items: center; width: 24px; height: 22px; }
.combo { position: relative; flex: none; width: 120px; height: 21px; }
.combo select {
  appearance: none;
  display: block;
  width: 100%;
  height: 100%;
  margin: 0;
  padding: 0 20px 0 4px;
  border: 1px solid #a8a8a8;
  border-radius: 2px;
  outline: 1px solid #fff;
  outline-offset: -2px;
  background: linear-gradient(90deg, #efefef, #efefef) 0 0 / calc(100% - 18px) 100% no-repeat #fcfcfc;
  font: 13px/17px "Liberation Serif", "Noto Sans CJK SC", serif;
  color: #6e6e6e;
}
.combo select.indent { padding-left: 18px; }
.combo::after { position: absolute; right: 5px; top: 9px; pointer-events: none; }

.properties { height: 26px; margin-left: -5px; }
.layers { width: 399px; border-right: 1px solid #999; }
.combo.wide { width: 300px; }
.combo.wide select { padding-left: 85px; }
.states { position: absolute; left: 4px; top: 2px; display: flex; align-items: center; pointer-events: none; }
.states svg { width: 16px; height: 16px; }
.swatch { width: 11px; height: 11px; margin: 3px 2px; border: 1px solid #000; background: #fff; }
.object { flex: 1; min-width: 0; padding-left: 6px; }
.grip { flex: none; width: 8px; height: 20px; background: linear-gradient(90deg, #aaa 1px, #fff 1px 2px, transparent 2px 4px, #aaa 4px 5px, #fff 5px 6px, transparent 6px); }
.combo.color { width: 150px; }
.combo.color select { padding-left: 18px; }
.rule { flex: none; width: 6px; height: 18px; background: linear-gradient(#999, #999) 2px 0 / 1px 100% no-repeat; }
.combo.linetype { width: 150px; }
.combo.linetype select { background: linear-gradient(#111, #111) 4px 10px / 126px 1px no-repeat #efefef; }

.workspace { flex: 1; min-height: 0; display: flex; border-top: 1px solid #a5a5a5; }
.dock {
  flex: none;
  align-self: flex-start;
  padding: 12px 0 5px;
  border-right: 1px solid #999;
  border-bottom: 1px solid #999;
  background: linear-gradient(#fff 1px, #a8a8a8 1px 2px, #f0f0f0 2px 5px, #fff 5px 6px, #a8a8a8 6px 7px, transparent 7px) 3px 3px / calc(100% - 5px) 8px no-repeat;
}
.draw { width: 24px; margin-left: -14px; }
.modify { width: 26px; padding-left: 1px; border-left: 1px solid #fff; }

.view { flex: 1; min-width: 0; display: flex; flex-direction: column; margin-left: 1px; border-top: 3px solid #747474; border-left: 2px solid #808080; }
.canvas { position: relative; flex: 1; min-height: 0; overflow: hidden; background: #000; }
.drawing { display: block; width: 100%; height: 100%; }
.ink, .lamp, .window, .limits, .hatch { fill: none; stroke: #fff; shape-rendering: crispEdges; }
.lamp { stroke: #ffb400; }
.window { stroke: #0ff; }
.limits { stroke: #ff0; }
.hatch { stroke: #8c8c8c; }
.shade { fill: #777; }
.axis { fill: #fff; font: 300 16px "Open Sans", sans-serif; }
.mark { fill: #b8b8b8; }
.brand { font: 700 24px "Liberation Sans", sans-serif; }
.du { fill: #111; font: 700 14px "Liberation Sans", sans-serif; }
.jy { font: 700 19px "Noto Sans CJK SC", sans-serif; }
.site { font: 500 12px "Noto Sans", sans-serif; }

.prompt { position: absolute; left: 448px; top: 149px; display: flex; gap: 3px; margin: 0; }
.prompt label, .prompt input { height: 22px; border: 1px solid #d0d0e0; font: 12px/20px "Noto Sans", "Noto Sans CJK SC", sans-serif; }
.prompt label { width: 42px; padding-left: 3px; background: #15154f; color: #ddddf0; }
.prompt input { width: 120px; padding: 1px 37px 1px 3px; border-radius: 0; background: linear-gradient(#39f, #39f) content-box no-repeat, #fff; color: #fff; }

.tabs { flex: none; display: flex; height: 13px; overflow: hidden; border-top: 1px solid #777; background: #f0f0f0; }
.step { flex: none; display: grid; place-items: center; width: 14px; height: 14px; border-right: 1px solid #aaa; }
.step svg { width: 10px; height: 10px; fill: #555; }
.tab { flex: none; height: 16px; width: 46px; padding: 0 6px 0 0; background: linear-gradient(112deg, transparent 0 41px, #555 41px 42px, transparent 42px); line-height: 14px; }
.tab.active { width: 46px; padding: 0 2px 0 0; background: #000; color: #fff; clip-path: polygon(0 0, 100% 0, 88% 100%, 12% 100%); }

.highlight { position: absolute; left: 70px; right: 6px; top: 119px; height: 213px; border: 5px solid #ed1c24; border-radius: 17px; pointer-events: none; }
```
